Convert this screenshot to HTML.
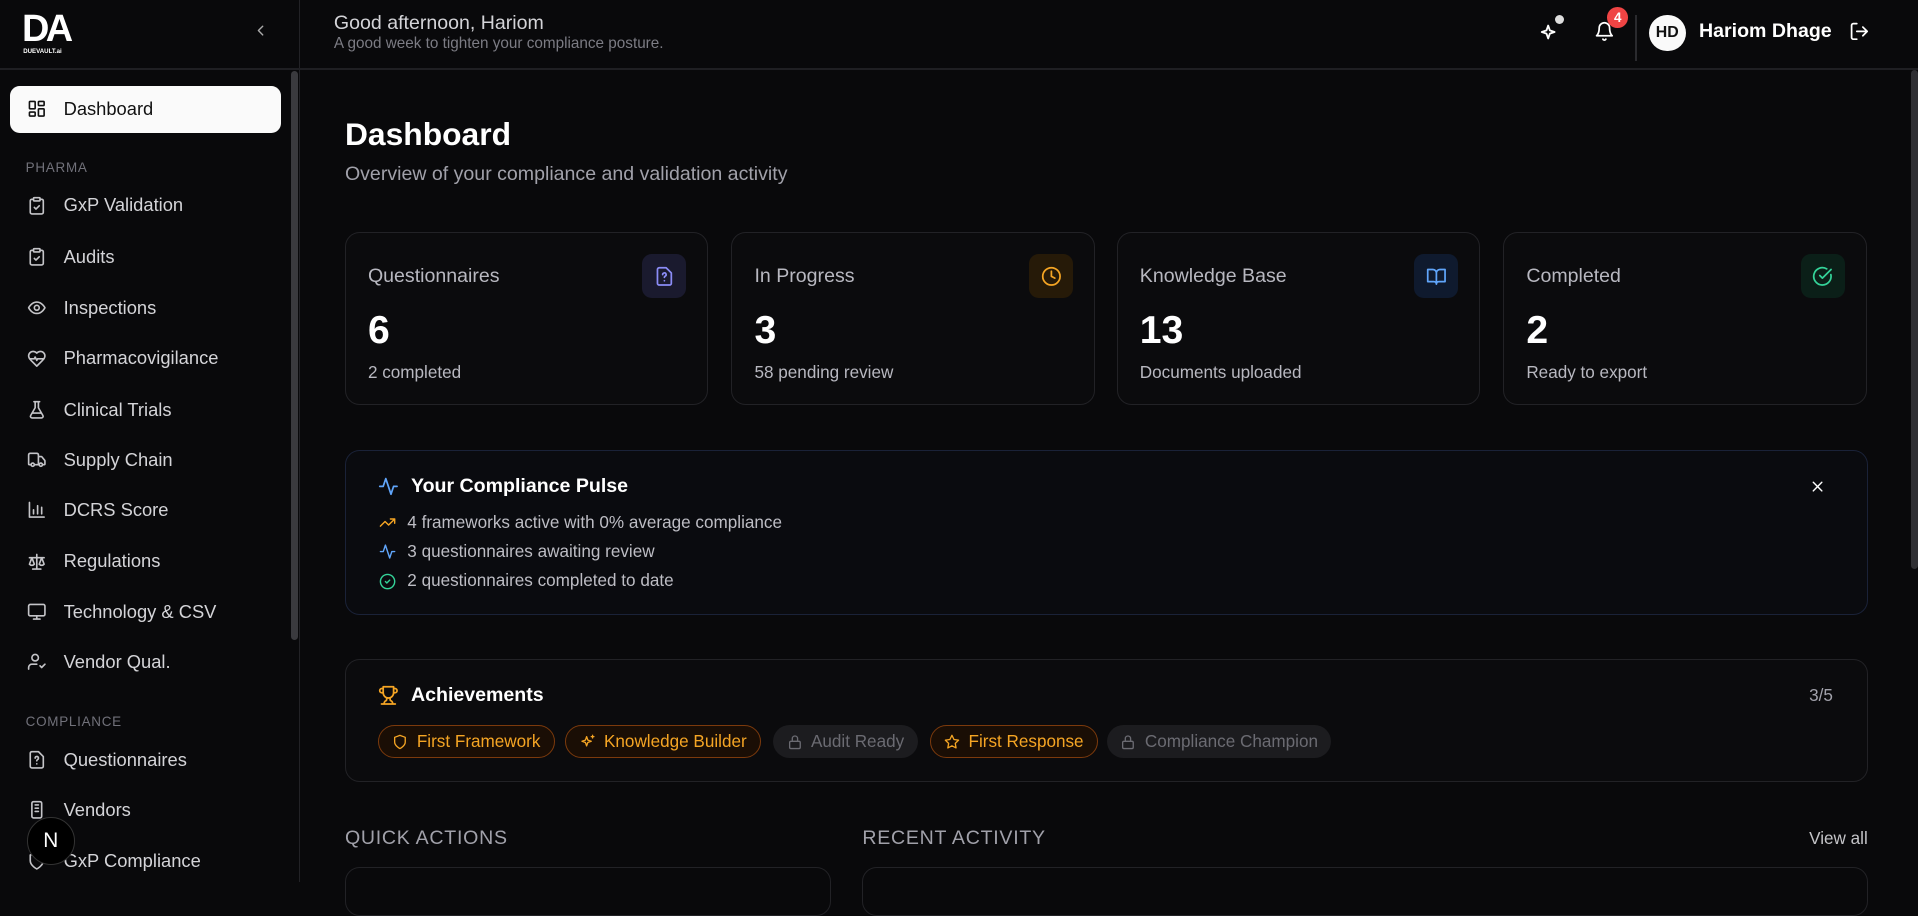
<!DOCTYPE html>
<html><head><meta charset="utf-8"><style>
html{zoom:1.22321}
*{box-sizing:border-box;margin:0;padding:0}
body{width:1568px;height:721px;overflow:hidden;background:#09090b;font-family:"Liberation Sans",sans-serif;color:#e4e4e7;position:relative}
.a{position:absolute}
svg{fill:none;stroke:currentColor;stroke-width:2;stroke-linecap:round;stroke-linejoin:round}
.side{left:0;top:0;width:245px;height:721px;background:#09090b;border-right:1px solid #222226}
.nav{position:absolute;left:22px;font-size:15px;color:#d4d4d8;display:flex;align-items:center;gap:14px}
.nav svg{width:16px;height:16px;color:#c4c4c8}
.sec{position:absolute;left:21px;font-size:11px;color:#71717a;letter-spacing:.6px}
.card{position:absolute;top:190px;width:297px;height:141px;border:1px solid #222226;border-radius:12px;background:#0b0b0d}
.card .l{position:absolute;left:18px;top:26px;font-size:16px;color:#b8b8c0}
.card .n{position:absolute;left:18px;top:62px;font-size:32px;font-weight:bold;color:#fff}
.card .s{position:absolute;left:18px;top:106px;font-size:14px;color:#b8b8c0}
.card .ib{position:absolute;right:17px;top:17px;width:36px;height:36px;border-radius:8px;display:flex;align-items:center;justify-content:center}
.card .ib svg{width:17px;height:17px}
.pl{position:absolute;left:310px;font-size:14px;color:#bdbdc4;display:flex;align-items:center;gap:9px}
.pl svg{width:14px;height:14px}
.pill{position:absolute;top:593px;height:27px;border-radius:14px;font-size:14px;display:flex;align-items:center;gap:7px;padding:0 11px}
.pill svg{width:13px;height:13px}
.on{border:1px solid #7c3a0c;background:#1a0e05;color:#f5a524}
.off{background:#1c1c1f;color:#6b6b72}
</style></head><body>
<div class="a side"></div>
<div class="a" style="left:0;top:56px;width:1568px;height:1px;background:#1f1f23"></div>
<!-- logo -->
<div class="a" style="left:18px;top:9px;font-size:31px;font-weight:bold;color:#fff;letter-spacing:-3px;line-height:31px">DA</div>
<div class="a" style="left:19px;top:39px;font-size:5px;font-weight:bold;color:#fff">DUEVAULT.ai</div>
<svg class="a" style="left:206px;top:18px;width:14px;height:14px;color:#aaa" viewBox="0 0 24 24"><path d="M15 18l-6-6 6-6"/></svg>
<div class="a" style="left:238px;top:58px;width:6px;height:465px;background:#3a3a3e;border-radius:3px"></div>
<div class="a" style="left:8px;top:70px;width:222px;height:39px;background:#fafafa;border-radius:8px"></div>
<div class="nav" style="top:80px;color:#111"><svg viewBox="0 0 24 24" style="color:#111"><rect x="3" y="3" width="7" height="9" rx="1"/><rect x="14" y="3" width="7" height="5" rx="1"/><rect x="14" y="12" width="7" height="9" rx="1"/><rect x="3" y="16" width="7" height="5" rx="1"/></svg>Dashboard</div>
<div class="sec" style="top:131px">PHARMA</div>
<div class="nav" style="top:159px"><svg viewBox="0 0 24 24"><rect x="8" y="2" width="8" height="4" rx="1"/><path d="M16 4h2a2 2 0 0 1 2 2v14a2 2 0 0 1-2 2H6a2 2 0 0 1-2-2V6a2 2 0 0 1 2-2h2"/><path d="M9 14l2 2 4-4"/></svg>GxP Validation</div>
<div class="nav" style="top:201px"><svg viewBox="0 0 24 24"><rect x="8" y="2" width="8" height="4" rx="1"/><path d="M16 4h2a2 2 0 0 1 2 2v14a2 2 0 0 1-2 2H6a2 2 0 0 1-2-2V6a2 2 0 0 1 2-2h2"/><path d="M9 14l2 2 4-4"/></svg>Audits</div>
<div class="nav" style="top:243px"><svg viewBox="0 0 24 24"><path d="M2 12s3.5-7 10-7 10 7 10 7-3.5 7-10 7S2 12 2 12z"/><circle cx="12" cy="12" r="3"/></svg>Inspections</div>
<div class="nav" style="top:284px"><svg viewBox="0 0 24 24"><path d="M19 14c1.5-1.5 3-3.2 3-5.5A5.5 5.5 0 0 0 16.5 3c-1.8 0-3 .5-4.5 2-1.5-1.5-2.7-2-4.5-2A5.5 5.5 0 0 0 2 8.5c0 2.3 1.5 4 3 5.5l7 7z"/><path d="M3.2 12H9l1-2 2 4 1-2h7.8"/></svg>Pharmacovigilance</div>
<div class="nav" style="top:326px"><svg viewBox="0 0 24 24"><path d="M10 2v7.5L4.5 19a2 2 0 0 0 1.7 3h11.6a2 2 0 0 0 1.7-3L14 9.5V2M8.5 2h7M7 16h10"/></svg>Clinical Trials</div>
<div class="nav" style="top:367px"><svg viewBox="0 0 24 24"><path d="M14 18V6a2 2 0 0 0-2-2H4a2 2 0 0 0-2 2v11a1 1 0 0 0 1 1h2M15 18H9M19 18h2a1 1 0 0 0 1-1v-3.6a1 1 0 0 0-.2-.6l-3.5-4.4A1 1 0 0 0 17.5 8H14"/><circle cx="17" cy="18" r="2"/><circle cx="7" cy="18" r="2"/></svg>Supply Chain</div>
<div class="nav" style="top:408px"><svg viewBox="0 0 24 24"><path d="M3 3v18h18M8 17v-5M13 17V7M18 17v-8"/></svg>DCRS Score</div>
<div class="nav" style="top:450px"><svg viewBox="0 0 24 24"><path d="M12 3v18M7 21h10M3 7h18M6 7l-3 8a4 4 0 0 0 6 0zM18 7l-3 8a4 4 0 0 0 6 0z"/></svg>Regulations</div>
<div class="nav" style="top:491px"><svg viewBox="0 0 24 24"><rect x="2" y="3" width="20" height="14" rx="2"/><path d="M8 21h8M12 17v4"/></svg>Technology &amp; CSV</div>
<div class="nav" style="top:532px"><svg viewBox="0 0 24 24"><circle cx="10" cy="7" r="4"/><path d="M2 21v-2a4 4 0 0 1 4-4h6M16 17l2 2 4-4"/></svg>Vendor Qual.</div>
<div class="sec" style="top:584px">COMPLIANCE</div>
<div class="nav" style="top:612px"><svg viewBox="0 0 24 24"><path d="M14 2H6a2 2 0 0 0-2 2v16a2 2 0 0 0 2 2h12a2 2 0 0 0 2-2V8z"/><path d="M10 10a2 2 0 1 1 3 1.7c-.6.4-1 .8-1 1.5M12 17h.01"/></svg>Questionnaires</div>
<div class="nav" style="top:653px"><svg viewBox="0 0 24 24"><rect x="6" y="2" width="12" height="20" rx="2"/><path d="M10 6h4M10 10h4M10 14h4"/></svg>Vendors</div>
<div class="nav" style="top:695px"><svg viewBox="0 0 24 24"><path d="M12 22s8-4 8-10V5l-8-3-8 3v7c0 6 8 10 8 10z"/></svg>GxP Compliance</div>
<div class="a" style="left:22px;top:668px;width:39px;height:39px;border-radius:50%;background:#000;border:1px solid #333;color:#fff;font-size:17px;display:flex;align-items:center;justify-content:center">N</div>
<!-- header -->
<div class="a" style="left:273px;top:10px;font-size:16px;color:#d4d4d8">Good afternoon, Hariom</div>
<div class="a" style="left:273px;top:29px;font-size:12.5px;color:#7c7c84">A good week to tighten your compliance posture.</div>
<svg class="a" style="left:1258px;top:17px;width:18px;height:18px;color:#fff" viewBox="0 0 24 24"><path d="M10 5l1.8 5.2L17 12l-5.2 1.8L10 19l-1.8-5.2L3 12l5.2-1.8z"/></svg>
<div class="a" style="left:1271px;top:12px;width:8px;height:8px;border-radius:50%;background:#ddd"></div>
<svg class="a" style="left:1303px;top:17px;width:17px;height:17px;color:#fff" viewBox="0 0 24 24"><path d="M6 8a6 6 0 0 1 12 0c0 7 3 9 3 9H3s3-2 3-9M10.3 21a1.9 1.9 0 0 0 3.4 0"/></svg>
<div class="a" style="left:1314px;top:6px;width:17px;height:17px;border-radius:50%;background:#ef4444;color:#fff;font-size:11px;font-weight:bold;display:flex;align-items:center;justify-content:center">4</div>
<div class="a" style="left:1337px;top:12px;width:1px;height:38px;background:#2a2a2e"></div>
<div class="a" style="left:1348px;top:12px;width:30px;height:30px;border-radius:50%;background:#fafafa;color:#111;font-size:13px;font-weight:bold;display:flex;align-items:center;justify-content:center">HD</div>
<div class="a" style="left:1389px;top:16px;font-size:16px;font-weight:bold;color:#fff">Hariom Dhage</div>
<svg class="a" style="left:1512px;top:17px;width:17px;height:17px;color:#fff" viewBox="0 0 24 24"><path d="M9 21H5a2 2 0 0 1-2-2V5a2 2 0 0 1 2-2h4M16 17l5-5-5-5M21 12H9"/></svg>
<div class="a" style="left:1562px;top:57px;width:6px;height:408px;background:#2f2f33;border-radius:3px"></div>
<!-- main -->
<div class="a" style="left:282px;top:95px;font-size:26px;font-weight:bold;color:#fff">Dashboard</div>
<div class="a" style="left:282px;top:133px;font-size:16px;color:#a1a1aa">Overview of your compliance and validation activity</div>
<div class="card" style="left:282px"><div class="l">Questionnaires</div><div class="n">6</div><div class="s">2 completed</div><div class="ib" style="background:#1a1a2e;color:#8b8cf6"><svg viewBox="0 0 24 24"><path d="M14 2H6a2 2 0 0 0-2 2v16a2 2 0 0 0 2 2h12a2 2 0 0 0 2-2V8z"/><path d="M10 10a2 2 0 1 1 3 1.7c-.6.4-1 .8-1 1.5M12 17h.01"/></svg></div></div>
<div class="card" style="left:598px"><div class="l">In Progress</div><div class="n">3</div><div class="s">58 pending review</div><div class="ib" style="background:#261a08;color:#f5a524"><svg viewBox="0 0 24 24"><circle cx="12" cy="12" r="10"/><path d="M12 6v6l4 2"/></svg></div></div>
<div class="card" style="left:913px"><div class="l">Knowledge Base</div><div class="n">13</div><div class="s">Documents uploaded</div><div class="ib" style="background:#0f1a2e;color:#60a5fa"><svg viewBox="0 0 24 24"><path d="M2 4h6a4 4 0 0 1 4 4v13a3 3 0 0 0-3-3H2zM22 4h-6a4 4 0 0 0-4 4v13a3 3 0 0 1 3-3h7z"/></svg></div></div>
<div class="card" style="left:1229px"><div class="l">Completed</div><div class="n">2</div><div class="s">Ready to export</div><div class="ib" style="background:#0b1f18;color:#34d399"><svg viewBox="0 0 24 24"><path d="M21.8 10A10 10 0 1 1 17 3.3"/><path d="M9 11l3 3L22 4"/></svg></div></div>
<!-- pulse -->
<div class="a" style="left:282px;top:368px;width:1245px;height:135px;border:1px solid #1a2238;border-radius:12px;background:#0a0b0f"></div>
<svg class="a" style="left:309px;top:389px;width:17px;height:17px;color:#60a5fa" viewBox="0 0 24 24"><path d="M22 12h-4l-3 9L9 3l-3 9H2"/></svg>
<div class="a" style="left:336px;top:388px;font-size:16px;font-weight:bold;color:#fff">Your Compliance Pulse</div>
<svg class="a" style="left:1479px;top:391px;width:14px;height:14px;color:#fff" viewBox="0 0 24 24"><path d="M18 6L6 18M6 6l12 12"/></svg>
<div class="pl" style="top:419px"><svg viewBox="0 0 24 24" style="color:#f5a524"><path d="M22 7l-8.5 8.5-5-5L2 17M16 7h6v6"/></svg>4 frameworks active with 0% average compliance</div>
<div class="pl" style="top:443px"><svg viewBox="0 0 24 24" style="color:#60a5fa"><path d="M22 12h-4l-3 9L9 3l-3 9H2"/></svg>3 questionnaires awaiting review</div>
<div class="pl" style="top:467px"><svg viewBox="0 0 24 24" style="color:#34d399"><circle cx="12" cy="12" r="10"/><path d="M9 12l2 2 4-4"/></svg>2 questionnaires completed to date</div>
<!-- achievements -->
<div class="a" style="left:282px;top:539px;width:1245px;height:100px;border:1px solid #222226;border-radius:12px;background:#0b0b0d"></div>
<svg class="a" style="left:309px;top:560px;width:17px;height:17px;color:#f5a524" viewBox="0 0 24 24"><path d="M6 9H4.5a2.5 2.5 0 0 1 0-5H6M18 9h1.5a2.5 2.5 0 0 0 0-5H18M4 22h16M10 14.7V17c0 .6-.5 1-1 1.2C7.8 18.8 7 20.2 7 22M14 14.7V17c0 .6.5 1 1 1.2 1.2.6 2 2 2 3.8M18 2H6v7a6 6 0 0 0 12 0z"/></svg>
<div class="a" style="left:336px;top:559px;font-size:16px;font-weight:bold;color:#fff">Achievements</div>
<div class="a" style="left:1479px;top:561px;font-size:14px;color:#a1a1aa">3/5</div>
<div class="pill on" style="left:309px"><svg viewBox="0 0 24 24"><path d="M12 22s8-4 8-10V5l-8-3-8 3v7c0 6 8 10 8 10z"/></svg>First Framework</div>
<div class="pill on" style="left:462px"><svg viewBox="0 0 24 24"><path d="M10 4l1.8 5.2L17 11l-5.2 1.8L10 18l-1.8-5.2L3 11l5.2-1.8zM19 2v4M21 4h-4"/></svg>Knowledge Builder</div>
<div class="pill off" style="left:632px"><svg viewBox="0 0 24 24"><rect x="4" y="11" width="16" height="11" rx="2"/><path d="M8 11V7a4 4 0 0 1 8 0v4"/></svg>Audit Ready</div>
<div class="pill on" style="left:760px"><svg viewBox="0 0 24 24"><path d="M12 2l3.1 6.3 6.9 1-5 4.9 1.2 6.8L12 17.8 5.8 21l1.2-6.8-5-4.9 6.9-1z"/></svg>First Response</div>
<div class="pill off" style="left:905px"><svg viewBox="0 0 24 24"><rect x="4" y="11" width="16" height="11" rx="2"/><path d="M8 11V7a4 4 0 0 1 8 0v4"/></svg>Compliance Champion</div>
<div class="a" style="left:282px;top:676px;font-size:16px;color:#a1a1aa;letter-spacing:.6px">QUICK ACTIONS</div>
<div class="a" style="left:705px;top:676px;font-size:16px;color:#a1a1aa;letter-spacing:.6px">RECENT ACTIVITY</div>
<div class="a" style="left:1479px;top:678px;font-size:14px;color:#c4c4c8">View all</div>
<div class="a" style="left:282px;top:709px;width:397px;height:40px;border:1px solid #222226;border-radius:12px"></div>
<div class="a" style="left:705px;top:709px;width:822px;height:40px;border:1px solid #222226;border-radius:12px"></div>
</body></html>
